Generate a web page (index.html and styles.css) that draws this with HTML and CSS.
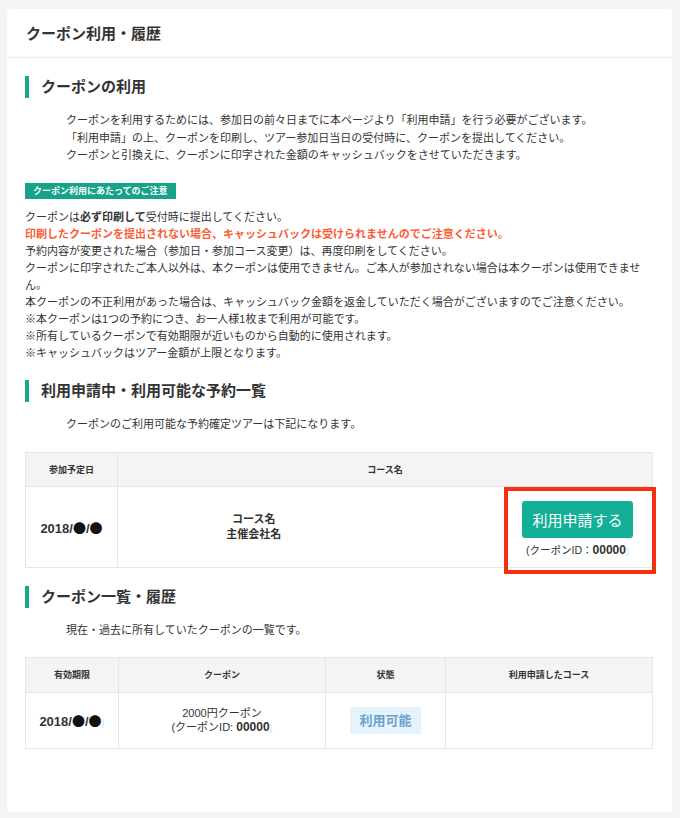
FILE: index.html
```html
<!DOCTYPE html>
<html lang="ja">
<head>
<meta charset="utf-8">
<title>クーポン利用・履歴</title>
<link rel="stylesheet" href="styles.css">
</head>
<body>
<div class="card">
	<div class="card-head">クーポン利用・履歴</div>
	<div class="card-body">
		<h2 class="sec-title">クーポンの利用</h2>
		<p class="lead">
			クーポンを利用するためには、参加日の前々日までに本ページより「利用申請」を行う必要がございます。<br>
			「利用申請」の上、クーポンを印刷し、ツアー参加日当日の受付時に、クーポンを提出してください。<br>
			クーポンと引換えに、クーポンに印字された金額のキャッシュバックをさせていただきます。
		</p>

		<div class="notice-label">クーポン利用にあたってのご注意</div>
		<p class="notice">
			クーポンは<b>必ず印刷して</b>受付時に提出してください。<br>
			<b class="warn">印刷したクーポンを提出されない場合、キャッシュバックは受けられませんのでご注意ください。</b><br>
			予約内容が変更された場合（参加日・参加コース変更）は、再度印刷をしてください。<br>
			クーポンに印字されたご本人以外は、本クーポンは使用できません。ご本人が参加されない場合は本クーポンは使用できません。<br>
			本クーポンの不正利用があった場合は、キャッシュバック金額を返金していただく場合がございますのでご注意ください。<br>
			※本クーポンは1つの予約につき、お一人様1枚まで利用が可能です。<br>
			※所有しているクーポンで有効期限が近いものから自動的に使用されます。<br>
			※キャッシュバックはツアー金額が上限となります。
		</p>

		<h2 class="sec-title">利用申請中・利用可能な予約一覧</h2>
		<p class="lead">クーポンのご利用可能な予約確定ツアーは下記になります。</p>

		<table class="list list-tour">
			<colgroup>
				<col class="c-date">
				<col class="c-course">
				<col>
			</colgroup>
			<tr>
				<th>参加予定日</th>
				<th colspan="2">コース名</th>
			</tr>
			<tr>
				<td class="date">2018/<span class="dot">●</span>/<span class="dot">●</span></td>
				<td class="course">コース名<br>主催会社名</td>
				<td class="apply-cell">
					<div class="apply">
						<button class="apply-btn">利用申請する</button>
						<p class="coupon-id">(クーポンID：<b>00000</b><span class="faint">)</span></p>
					</div>
				</td>
			</tr>
		</table>

		<h2 class="sec-title">クーポン一覧・履歴</h2>
		<p class="lead">現在・過去に所有していたクーポンの一覧です。</p>

		<table class="list list-coupon">
			<colgroup>
				<col class="c-limit">
				<col class="c-coupon">
				<col class="c-state">
				<col>
			</colgroup>
			<tr>
				<th>有効期限</th>
				<th>クーポン</th>
				<th>状態</th>
				<th>利用申請したコース</th>
			</tr>
			<tr>
				<td class="date">2018/<span class="dot">●</span>/<span class="dot">●</span><span class="faint">)</span></td>
				<td class="coupon">2000円クーポン<br>(クーポンID: <b>00000</b><span class="faint">)</span></td>
				<td><span class="state">利用可能</span></td>
				<td></td>
			</tr>
		</table>
	</div>
</div>
</body>
</html>
```

FILE: styles.css
```css
body
{
	margin: 0;
	background: #f4f4f4;
	font-family: "Liberation Sans", "Noto Sans CJK JP", sans-serif;
	color: #333;
}

.card
{
	margin: 9px 8px 7px 7px;
	padding-bottom: 63px;
	background: #fff;
	border-radius: 4px;
}

.card-head
{
	height: 48px;
	padding: 0 19px;
	border-bottom: 1px solid #ececec;
	font-size: 15px;
	font-weight: bold;
	line-height: 50px;
}

.card-body
{
	padding: 0 19px 0 18px;
}

.sec-title
{
	margin: 18px 0 0;
	padding-left: 12px;
	height: 22px;
	border-left: 4px solid #17a78d;
	font-size: 15px;
	line-height: 22px;
}

.lead
{
	margin: 14px 0 0;
	padding-left: 41px;
	font-size: 11px;
	line-height: 17.5px;
}

.notice-label
{
	display: table;
	margin-top: 18px;
	padding: 0 8px;
	background: #17a38a;
	color: #fff;
	font-size: 9px;
	font-weight: bold;
	line-height: 16px;
}

.notice
{
	margin: 10px 0 0;
	font-size: 11px;
	line-height: 17px;
}

.warn
{
	color: #fa5c38;
}

/* tables */
.list
{
	width: 100%;
	margin-top: 18px;
	border-collapse: collapse;
	table-layout: fixed;
	border: 1px solid #e6e6e6;
}

.list th
{
	height: 33px;
	padding: 0;
	background: #f4f4f4;
	border: 1px solid #e6e6e6;
	font-size: 9px;
	font-weight: bold;
}

.list td
{
	padding: 0;
	border: 1px solid #e6e6e6;
	text-align: center;
	vertical-align: middle;
}

.c-date { width: 92px; }
.c-course { width: 272px; }
.c-limit { width: 93px; }
.c-coupon { width: 207px; }
.c-state { width: 120px; }

.list-tour
{
	margin-top: 19px;
}

.list-tour td
{
	height: 80px;
}

.list-coupon
{
	margin-top: 17px;
}

.list-coupon td
{
	height: 55px;
}

.list-coupon th
{
	height: 34px;
}

.list td.date
{
	font-size: 13px;
	font-weight: bold;
}

.dot
{
	font-family: "Noto Sans CJK JP", sans-serif;
	font-size: 13px;
	font-weight: normal;
	color: #111;
}

.list td.course
{
	border-right: none;
	font-size: 11px;
	font-weight: bold;
	line-height: 15px;
}

.list td.apply-cell
{
	border-left: none;
	padding-right: 19px;
	text-align: right;
}

.apply
{
	display: inline-block;
	position: relative;
	width: 111px;
	margin-top: 4px;
	text-align: center;
}

/* red frame drawn over the apply block */
.apply::after
{
	content: "";
	position: absolute;
	top: -14px;
	left: -18px;
	right: -23px;
	bottom: -16px;
	border: 4px solid #f4300e;
}

.apply-btn
{
	display: block;
	width: 111px;
	height: 37px;
	padding: 0;
	border: 0;
	border-radius: 3px;
	background: #12b096;
	color: #fff;
	font-family: "Liberation Sans", "Noto Sans CJK JP", sans-serif;
	font-size: 15px;
}

.coupon-id
{
	margin: 5px 0 0;
	font-size: 10.5px;
	line-height: 14px;
	white-space: nowrap;
}

.coupon-id b
{
	font-size: 12px;
}

.faint
{
	color: #d2dce6;
	font-weight: normal;
	font-size: 9px;
}

.list td.coupon
{
	font-size: 11px;
	line-height: 14px;
}

.coupon b
{
	font-size: 12px;
}

.state
{
	display: inline-block;
	padding: 0 9px;
	background: #e5f4fc;
	color: #6aa1cd;
	font-size: 13px;
	font-weight: bold;
	line-height: 27px;
}
```
